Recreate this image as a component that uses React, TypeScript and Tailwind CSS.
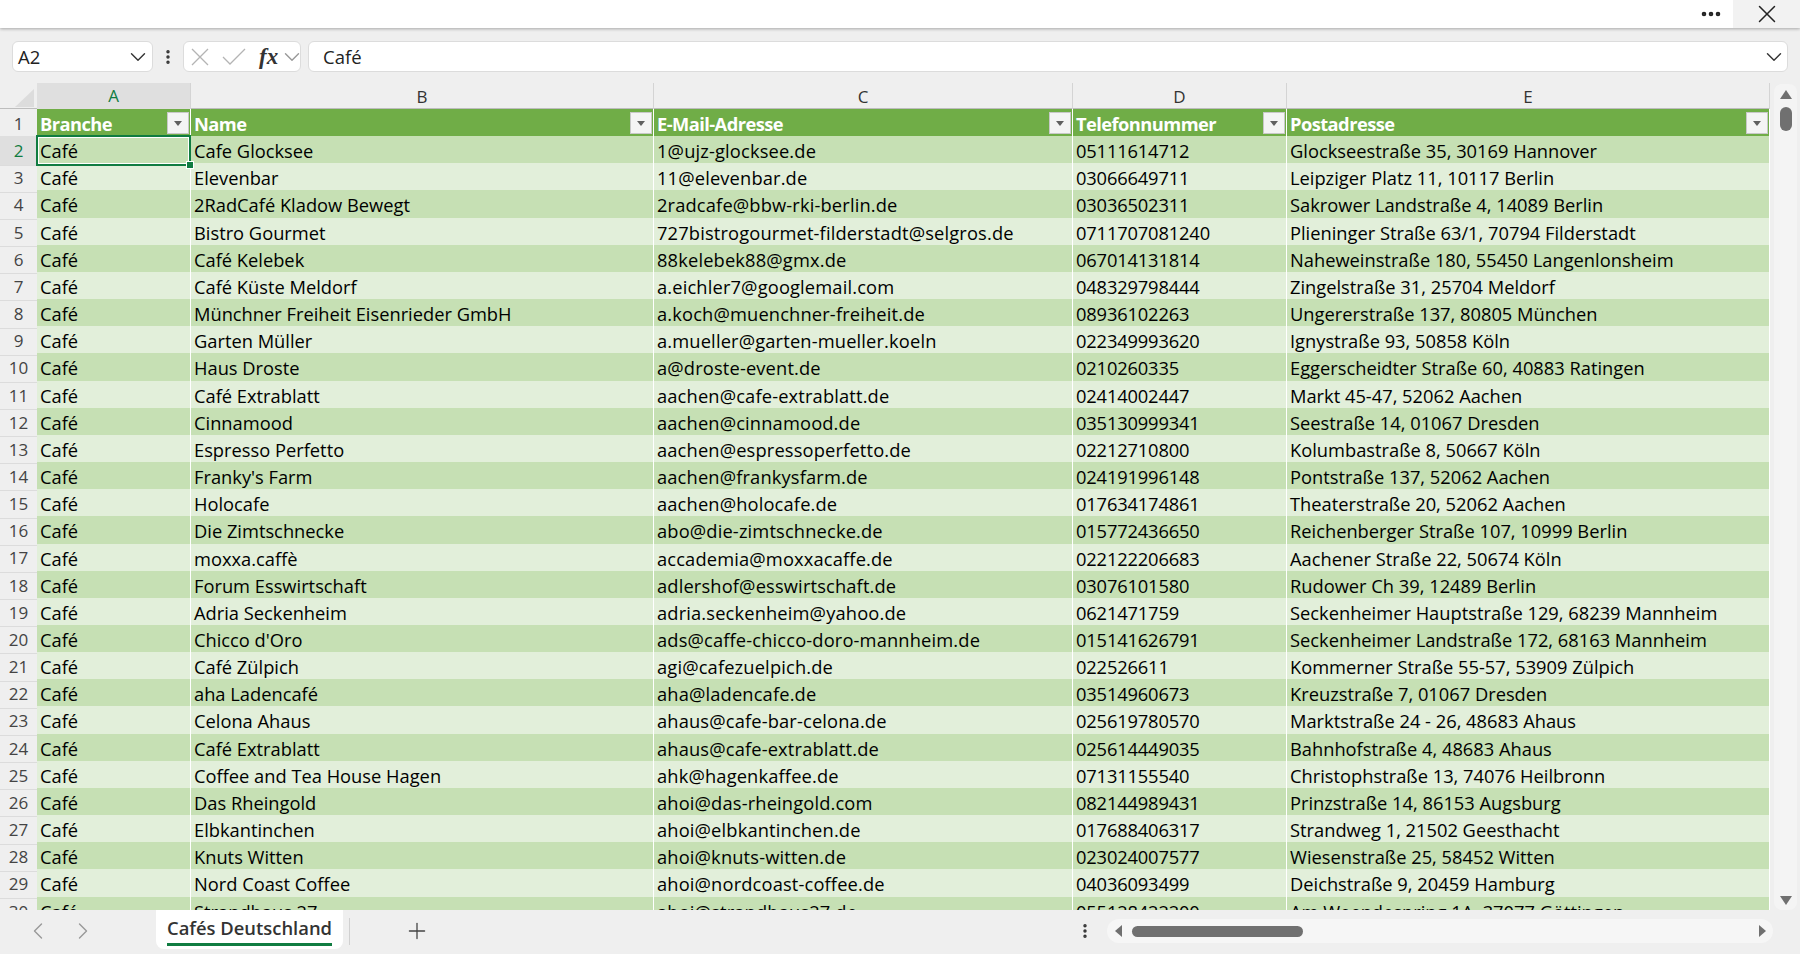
import { ChevronDown, ChevronLeft, ChevronRight, MoreHorizontal, MoreVertical, Plus, X } from 'lucide-react';

const rows = [
    ['Cafe Glocksee', '1@ujz-glocksee.de', '05111614712', 'Glockseestraße 35, 30169 Hannover'],
    ['Elevenbar', '11@elevenbar.de', '03066649711', 'Leipziger Platz 11, 10117 Berlin'],
    ['2RadCafé Kladow Bewegt', '2radcafe@bbw-rki-berlin.de', '03036502311', 'Sakrower Landstraße 4, 14089 Berlin'],
    ['Bistro Gourmet', '727bistrogourmet-filderstadt@selgros.de', '0711707081240', 'Plieninger Straße 63/1, 70794 Filderstadt'],
    ['Café Kelebek', '88kelebek88@gmx.de', '067014131814', 'Naheweinstraße 180, 55450 Langenlonsheim'],
    ['Café Küste Meldorf', 'a.eichler7@googlemail.com', '048329798444', 'Zingelstraße 31, 25704 Meldorf'],
    ['Münchner Freiheit Eisenrieder GmbH', 'a.koch@muenchner-freiheit.de', '08936102263', 'Ungererstraße 137, 80805 München'],
    ['Garten Müller', 'a.mueller@garten-mueller.koeln', '022349993620', 'Ignystraße 93, 50858 Köln'],
    ['Haus Droste', 'a@droste-event.de', '0210260335', 'Eggerscheidter Straße 60, 40883 Ratingen'],
    ['Café Extrablatt', 'aachen@cafe-extrablatt.de', '02414002447', 'Markt 45-47, 52062 Aachen'],
    ['Cinnamood', 'aachen@cinnamood.de', '035130999341', 'Seestraße 14, 01067 Dresden'],
    ['Espresso Perfetto', 'aachen@espressoperfetto.de', '02212710800', 'Kolumbastraße 8, 50667 Köln'],
    ["Franky's Farm", 'aachen@frankysfarm.de', '024191996148', 'Pontstraße 137, 52062 Aachen'],
    ['Holocafe', 'aachen@holocafe.de', '017634174861', 'Theaterstraße 20, 52062 Aachen'],
    ['Die Zimtschnecke', 'abo@die-zimtschnecke.de', '015772436650', 'Reichenberger Straße 107, 10999 Berlin'],
    ['moxxa.caffè', 'accademia@moxxacaffe.de', '022122206683', 'Aachener Straße 22, 50674 Köln'],
    ['Forum Esswirtschaft', 'adlershof@esswirtschaft.de', '03076101580', 'Rudower Ch 39, 12489 Berlin'],
    ['Adria Seckenheim', 'adria.seckenheim@yahoo.de', '0621471759', 'Seckenheimer Hauptstraße 129, 68239 Mannheim'],
    ["Chicco d'Oro", 'ads@caffe-chicco-doro-mannheim.de', '015141626791', 'Seckenheimer Landstraße 172, 68163 Mannheim'],
    ['Café Zülpich', 'agi@cafezuelpich.de', '022526611', 'Kommerner Straße 55-57, 53909 Zülpich'],
    ['aha Ladencafé', 'aha@ladencafe.de', '03514960673', 'Kreuzstraße 7, 01067 Dresden'],
    ['Celona Ahaus', 'ahaus@cafe-bar-celona.de', '025619780570', 'Marktstraße 24 - 26, 48683 Ahaus'],
    ['Café Extrablatt', 'ahaus@cafe-extrablatt.de', '025614449035', 'Bahnhofstraße 4, 48683 Ahaus'],
    ['Coffee and Tea House Hagen', 'ahk@hagenkaffee.de', '07131155540', 'Christophstraße 13, 74076 Heilbronn'],
    ['Das Rheingold', 'ahoi@das-rheingold.com', '082144989431', 'Prinzstraße 14, 86153 Augsburg'],
    ['Elbkantinchen', 'ahoi@elbkantinchen.de', '017688406317', 'Strandweg 1, 21502 Geesthacht'],
    ['Knuts Witten', 'ahoi@knuts-witten.de', '023024007577', 'Wiesenstraße 25, 58452 Witten'],
    ['Nord Coast Coffee', 'ahoi@nordcoast-coffee.de', '04036093499', 'Deichstraße 9, 20459 Hamburg'],
    ['Strandhaus 27', 'ahoi@strandhaus27.de', '055128422200', 'Am Weendespring 1A, 37077 Göttingen'],
];

const columns = ['A', 'B', 'C', 'D', 'E'];
const titles = ['Branche', 'Name', 'E-Mail-Adresse', 'Telefonnummer', 'Postadresse'];
const gridCols = 'grid grid-cols-[37px_154px_463px_419px_214px_483px]';

function FilterButton() {
    return (
        <span className="absolute top-[3px] right-px flex h-[22px] w-[22px] items-center justify-center border border-[#c8c8c8] bg-[#f4f4f4]">
            <span className="h-0 w-0 border-x-[4.5px] border-t-[5px] border-x-transparent border-t-[#606060]" />
        </span>
    );
}

export default function App() {
    return (
        <div className="flex h-[954px] w-[1800px] flex-col overflow-hidden bg-[#efefef] font-['Open_Sans',sans-serif] text-black">
            <div className="relative z-10 flex h-[28px] shrink-0 items-center justify-end bg-white shadow-[0_1px_3px_rgba(0,0,0,0.3)]">
                <MoreHorizontal className="mr-[10px] size-[24px] text-[#222]" strokeWidth={2.6} />
                <div className="flex h-full w-[67px] items-center justify-center bg-[#f2f2f2]">
                    <X className="size-[30px] text-[#222]" strokeWidth={1.2} />
                </div>
            </div>

            <div className="mt-[13px] flex h-[31px] shrink-0 items-stretch px-[12px] text-[#222]">
                <div className="flex w-[141px] items-center justify-between rounded-[6px] border border-[#dcdcdc] bg-white pr-px pl-[5px] text-[18.5px]">
                    <span>A2</span>
                    <ChevronDown className="size-[26px] text-[#333]" strokeWidth={1.3} />
                </div>
                <div className="flex w-[30px] items-center justify-center">
                    <MoreVertical className="size-[18px] text-[#333]" strokeWidth={2.6} />
                </div>
                <div className="flex w-[118px] items-center rounded-[6px] border border-[#dcdcdc] bg-white pl-[7px]">
                    <svg className="shrink-0" width="18" height="18" viewBox="0 0 18 18" fill="none" stroke="#b4b4b4" strokeWidth="1.3">
                        <path d="M1 1L17 17M17 1L1 17" />
                    </svg>
                    <svg className="ml-[13px] shrink-0" width="24" height="17" viewBox="0 0 24 17" fill="none" stroke="#b4b4b4" strokeWidth="1.3">
                        <path d="M1 9L8 16L23 1" />
                    </svg>
                    <span className="ml-[13px] shrink-0 font-['Liberation_Serif',serif] text-[23px] leading-none font-bold text-[#333] italic">fx</span>
                    <ChevronDown className="ml-[1px] size-[26px] shrink-0 text-[#999]" strokeWidth={1.3} />
                </div>
                <div className="ml-[7px] flex flex-1 items-center justify-between rounded-[6px] border border-[#dcdcdc] bg-white pr-0 pl-[14px] text-[18.5px]">
                    <span>Café</span>
                    <ChevronDown className="size-[26px] text-[#333]" strokeWidth={1.3} />
                </div>
            </div>

            <div className="mt-[11px] flex h-[827px] min-h-0 shrink-0">
                <div className="h-full w-[1770px] shrink-0 overflow-hidden">
                    <div className={`${gridCols} h-[26px] border-b border-[#bdbdbd]`}>
                        <div className="flex items-end justify-end pr-[3px] pb-[3px]">
                            <span className="h-0 w-0 border-b-[18px] border-l-[19px] border-b-[#dcdcdc] border-l-transparent" />
                        </div>
                        {columns.map((c, i) => (
                            <div
                                key={c}
                                className={`flex items-center justify-center border-r border-[#d4d4d4] text-[17px] ${
                                    i === 0 ? 'border-b border-b-[#107c41] bg-[#dfdfdf] text-[#107c41]' : 'text-[#333]'
                                }`}
                            >
                                {c}
                            </div>
                        ))}
                    </div>

                    <div className={`${gridCols} h-[27.17px]`}>
                        <div className="flex items-center justify-center border-b border-[#dcdcdc] pt-px text-[17px] text-[#444]">1</div>
                        {titles.map((t) => (
                            <div key={t} className="relative flex items-center border-r border-b-[2px] border-white bg-[#70ad47] pt-px pl-[3px] text-[18.3px] font-bold tracking-[-0.55px] text-white">
                                {t}
                                <FilterButton />
                            </div>
                        ))}
                    </div>

                    {rows.map((r, i) => (
                        <div key={i} className={`${gridCols} h-[27.17px]`}>
                            <div
                                className={`flex items-center justify-center border-b border-[#dcdcdc] pt-px text-[17px] ${
                                    i === 0 ? 'bg-[#dfdfdf] text-[#107c41]' : 'text-[#444]'
                                }`}
                            >
                                {i + 2}
                            </div>
                            {['Café', ...r].map((cell, j) => (
                                <div
                                    key={j}
                                    className={`relative flex items-center border-r border-b border-white pt-px pl-[3px] text-[18.3px] whitespace-nowrap ${
                                        i % 2 === 0 ? 'bg-[#c6e0b4]' : 'bg-[#e2efda]'
                                    } ${j === 3 ? 'tracking-[-0.15px]' : ''} ${j === 2 ? 'tracking-[0.15px]' : ''} ${i === 0 && j === 0 ? 'z-10' : ''}`}
                                >
                                    {cell}
                                    {i === 0 && j === 0 && (
                                        <span className="absolute -inset-px border-2 border-[#107c41] shadow-[inset_0_0_0_1px_#ffffff]">
                                            <span className="absolute -right-[4px] -bottom-[4px] size-[6px] bg-[#107c41] outline outline-white" />
                                        </span>
                                    )}
                                </div>
                            ))}
                        </div>
                    ))}
                </div>

                <div className="mt-px mr-[3px] ml-[4px] flex h-[826px] flex-1 flex-col items-center rounded-[8px] bg-[#f4f4f4] pt-[6px] pb-[5px]">
                    <span className="h-0 w-0 border-x-[6.5px] border-b-[9px] border-x-transparent border-b-[#707070]" />
                    <span className="mt-[8px] h-[24px] w-[12px] rounded-full bg-[#707070]" />
                    <span className="mt-auto h-0 w-0 border-x-[6.5px] border-t-[9px] border-x-transparent border-t-[#707070]" />
                </div>
            </div>

            <div className="flex h-[44px] shrink-0 items-start bg-[#efefef]">
                <div className="flex h-[28px] w-[156px] shrink-0 items-center pt-[14px] pl-[24px]">
                    <ChevronLeft className="size-[28px] text-[#999]" strokeWidth={1.2} />
                    <ChevronRight className="ml-[17px] size-[28px] text-[#999]" strokeWidth={1.2} />
                </div>
                <div className="flex h-[39px] w-[187px] shrink-0 flex-col items-center rounded-b-[8px] bg-white pt-[6px] text-[18.4px] leading-[24px] font-semibold text-[#333]">
                    <span>Cafés Deutschland</span>
                    <span className="mt-[3px] h-[3px] w-[165px] bg-[#107c41]" />
                </div>
                <span className="mt-[8px] ml-[6px] h-[27px] w-px bg-[#d0d0d0]" />
                <Plus className="mt-[8px] ml-[54px] size-[26px] text-[#444]" strokeWidth={1.2} />
                <MoreVertical className="mt-[12px] ml-[646px] size-[18px] text-[#333]" strokeWidth={2.6} />
                <div className="mt-[9px] ml-[13px] flex h-[24px] w-[666px] shrink-0 items-center rounded-full bg-[#f6f6f6] pr-[7px] pl-[8px]">
                    <span className="h-0 w-0 border-y-[6px] border-r-[7px] border-y-transparent border-r-[#707070]" />
                    <span className="ml-[10px] h-[11px] w-[171px] rounded-full bg-[#707070]" />
                    <span className="ml-auto h-0 w-0 border-y-[6px] border-l-[7px] border-y-transparent border-l-[#707070]" />
                </div>
            </div>
        </div>
    );
}
